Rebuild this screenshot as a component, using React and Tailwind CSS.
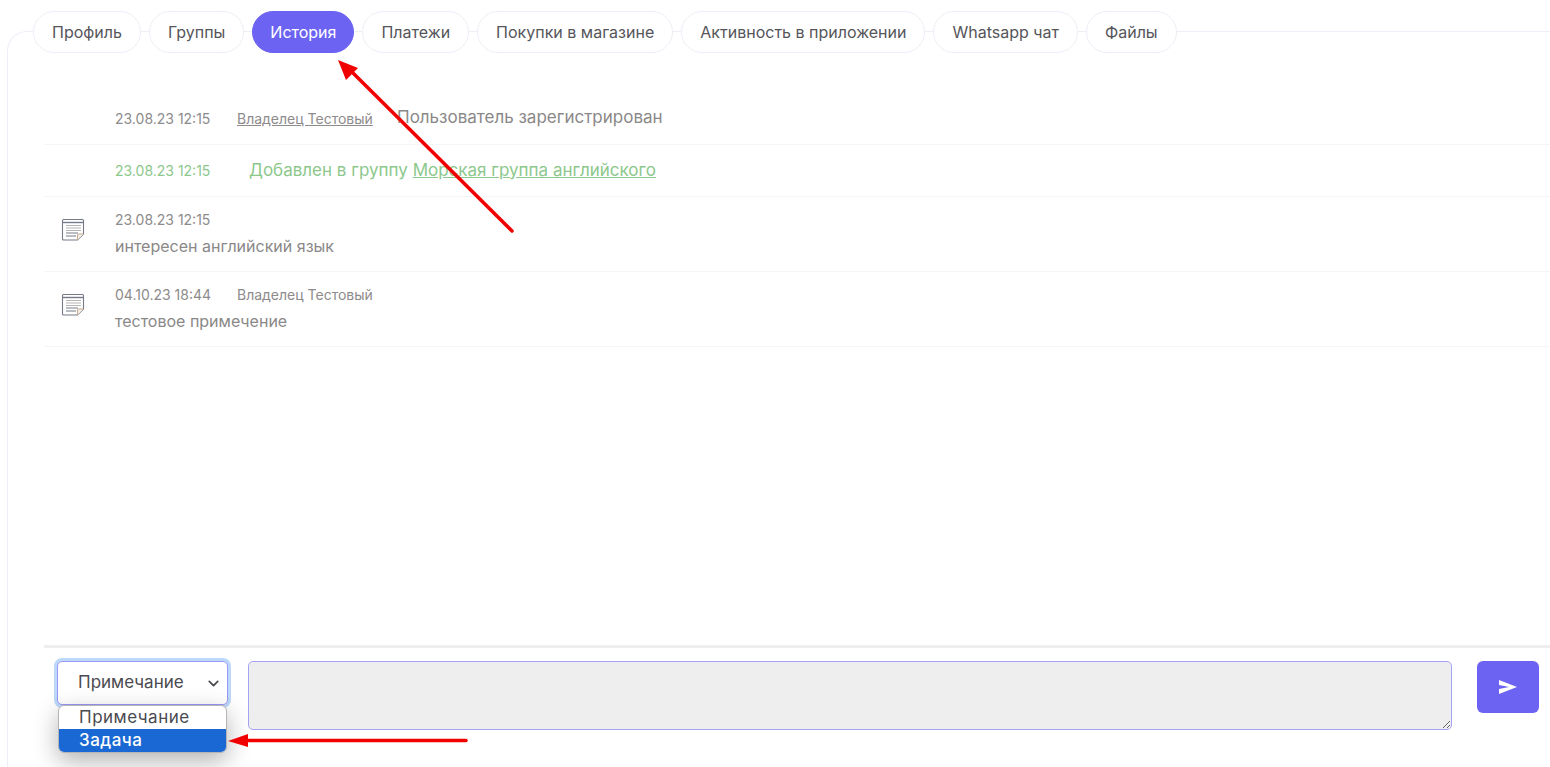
import React from 'react';
import { ChevronDown } from 'lucide-react';

const TABS = ['Профиль', 'Группы', 'История', 'Платежи', 'Покупки в магазине', 'Активность в приложении', 'Whatsapp чат', 'Файлы'];

function NoteIcon() {
  return (
    <svg width="24" height="24" viewBox="0 0 24 24" fill="none" className="shrink-0">
      <path d="M1.5 3.5a1 1 0 0 1 1-1h19a1 1 0 0 1 1 1v13.5l-6 6h-14a1 1 0 0 1-1-1z" stroke="#777a88" strokeWidth="1.1" fill="#fff" />
      <path d="M1.5 5.5h21" stroke="#777a88" strokeWidth="1.4" />
      <path d="M5 8.5h15M5 11h15M5 13.5h15" stroke="#b5b5b5" strokeWidth="1.1" />
      <path d="M5 16h12M5 19h10" stroke="#777a88" strokeWidth="1" />
      <path d="M22.5 17h-5a1 1 0 0 0-1 1v5" stroke="#c9a88a" strokeWidth="1" fill="#f2efe9" />
    </svg>
  );
}

function NoteRow({ date, author, text }) {
  return (
    <div className="flex h-[75px] border-b border-[#f5f5f7] pt-[13px]">
      <div className="w-[71px] pl-[17px] pt-[7px]">
        <NoteIcon />
      </div>
      <div>
        <div className="flex h-[19px] items-center text-[14px] text-[#8d8b8b]">
          <span className="w-[122px]">{date}</span>
          {author ? <span>{author}</span> : null}
        </div>
        <p className="mt-[3px] text-[16px] leading-[28px] text-[#8a8888]">{text}</p>
      </div>
    </div>
  );
}

export default function App() {
  return (
    <div className="relative h-[767px] overflow-hidden bg-white font-['Inter',sans-serif]">
      <div className="ml-[7px] mt-[31px] flex h-[736px] flex-col rounded-tl-[20px] border-l border-t border-[#eceff6]">
        <div className="-mt-[21px] flex gap-2 pl-[25px]">
          {TABS.map((tab) => (
            <button
              key={tab}
              type="button"
              className={
                tab === 'История'
                  ? 'h-[42px] rounded-full border border-[#6c63f2] bg-[#6c63f2] px-[17px] text-[16px] text-white'
                  : 'h-[42px] rounded-full border border-[#eceff6] bg-white px-[18px] text-[16px] text-[#55555a]'
              }
            >
              {tab}
            </button>
          ))}
        </div>

        <div className="ml-[36px] mt-[39px] flex-1">
          <div className="flex h-[53px] items-center border-b border-[#f5f5f7] pl-[71px]">
            <span className="w-[122px] text-[14px] text-[#8d8b8b]">23.08.23 12:15</span>
            <a className="w-[160px] text-[14px] text-[#8d8b8b] underline">Владелец Тестовый</a>
            <span className="-ml-[0px] text-[17px] text-[#8a8888]">Пользователь зарегистрирован</span>
          </div>
          <div className="flex h-[52px] items-center border-b border-[#f5f5f7] pl-[71px]">
            <span className="w-[134px] text-[14px] text-[#8cc88c]">23.08.23 12:15</span>
            <span className="text-[17px] text-[#8cc88c]">
              Добавлен в группу <a className="underline">Морская группа английского</a>
            </span>
          </div>
          <NoteRow date="23.08.23 12:15" text="интересен английский язык" />
          <NoteRow date="04.10.23 18:44" author="Владелец Тестовый" text="тестовое примечение" />
        </div>

        <div className="ml-[36px] flex h-[122px] gap-5 border-t-[3px] border-[#eeeeee] pl-[13px] pt-[13px]">
          <div className="relative h-[44px] w-[171px] shrink-0 rounded-[5px] border border-[#9d97f5] bg-white shadow-[0_0_0_3px_#bcd9fa]">
            <div className="flex h-full items-center justify-between pl-[20px] pr-[5px] text-[17px] text-[#4a4a50]">
              Примечание
              <ChevronDown size={17} strokeWidth={2.4} />
            </div>
            <div className="absolute left-0 top-[43px] w-[169px] overflow-hidden rounded-[6px] border border-[#b5b5b5] bg-white text-[17px] leading-[23px] tracking-[0.5px] shadow-[0_8px_24px_rgba(0,0,0,0.3)]">
              <div className="pl-[20px] text-[#4a4a50]">Примечание</div>
              <div className="bg-[#1a68d4] pl-[20px] font-medium text-white">Задача</div>
            </div>
          </div>
          <textarea className="h-[69px] flex-1 rounded-[5px] border border-[#a8a2f6] bg-[#eeeeee]" />
          <button type="button" className="ml-[5px] mr-[11px] flex h-[52px] w-[62px] items-center justify-center rounded-[6px] bg-[#6c63f2]">
            <svg width="20" height="16" viewBox="0 0 20 16" fill="white">
              <path d="M1 1l18 7-18 7v-5l10-2-10-2z" />
            </svg>
          </button>
        </div>
      </div>

      {/* red annotation arrows */}
      <svg className="pointer-events-none absolute inset-0" width="1550" height="767" fill="none">
        <path d="M512 231L352 72" stroke="#f00000" strokeWidth="3.5" strokeLinecap="round" />
        <path d="M338 60l8 20 12-12z" fill="#f00000" />
        <path d="M466 740.5H244" stroke="#f00000" strokeWidth="3.5" strokeLinecap="round" />
        <path d="M228 741l20-7v13z" fill="#f00000" />
      </svg>
    </div>
  );
}
